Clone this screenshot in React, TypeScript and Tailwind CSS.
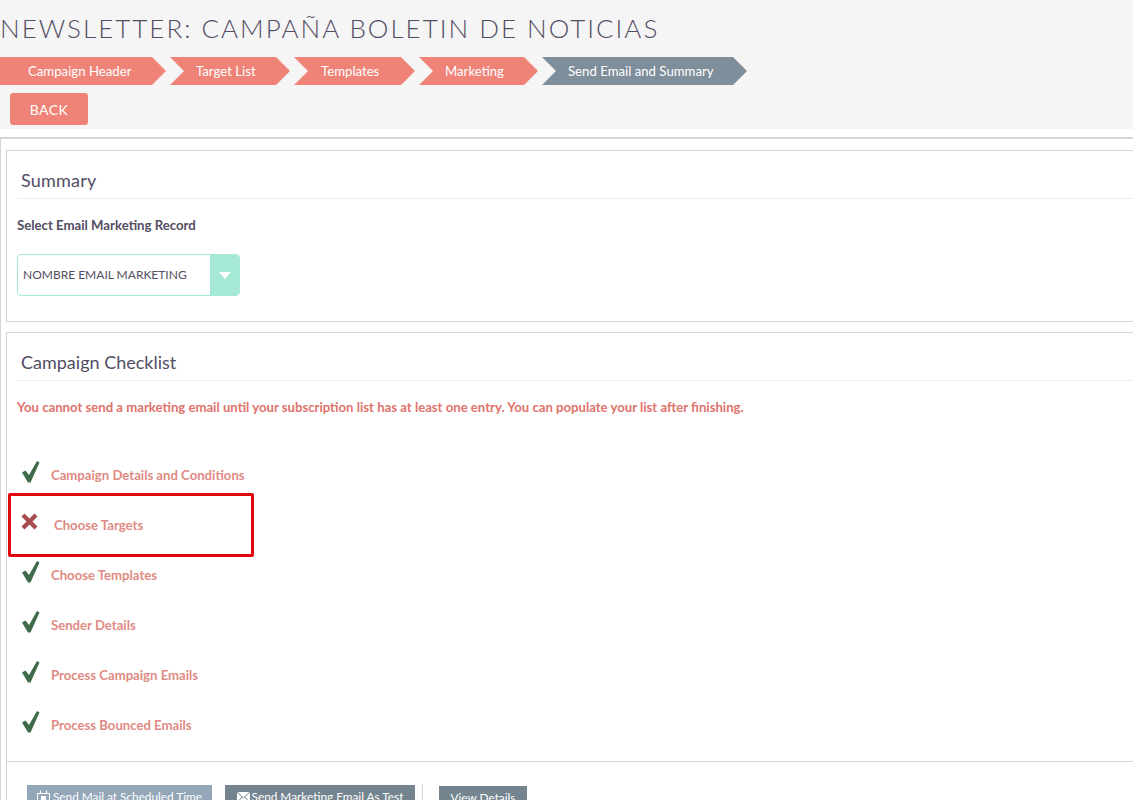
const steps = [
  { label: 'Campaign Header', width: 'w-[166px]', pad: 'pl-[28px]', first: true },
  { label: 'Target List', width: 'w-[120px]', pad: 'pl-[26px]' },
  { label: 'Templates', width: 'w-[121px]', pad: 'pl-[27px]' },
  { label: 'Marketing', width: 'w-[119px]', pad: 'pl-[26px]' },
  { label: 'Send Email and Summary', width: 'w-[205px]', pad: 'pl-[26px]', active: true },
]

const checklist = [
  { label: 'Campaign Details and Conditions', ok: true },
  { label: 'Choose Targets', ok: false },
  { label: 'Choose Templates', ok: true },
  { label: 'Sender Details', ok: true },
  { label: 'Process Campaign Emails', ok: true },
  { label: 'Process Bounced Emails', ok: true },
]

function Check() {
  return (
    <svg width="18" height="22" viewBox="0 0 18 22" className="mb-[7px] ml-[1px] shrink-0">
      <path d="M0 11.5 L3.5 9.5 L7 14 L15 0 L17.5 1.5 L8.5 21.5 L6 21.5 Z" fill="#3f6b4a" />
    </svg>
  )
}

function Cross() {
  return (
    <svg width="18" height="18" viewBox="0 0 18 18" className="mb-[6px] shrink-0">
      <path d="M0.5 3.5 L3.5 0.5 L8.5 5.5 L13.5 0.5 L16.5 3.5 L11.5 8.5 L16.5 13.5 L13.5 16.5 L8.5 11.5 L3.5 16.5 L0.5 13.5 L5.5 8.5 Z" fill="#a64b4f" />
    </svg>
  )
}

function ClockIcon() {
  return (
    <svg width="13" height="14" viewBox="0 0 13 14" className="mt-[2px] shrink-0" fill="none" stroke="white">
      <path d="M0.5 3.5 H12.5 V13.5 H0.5 Z M3.5 0.5 V3 M9.5 0.5 V3" />
      <rect x="4" y="6" width="5" height="7" fill="white" stroke="none" />
    </svg>
  )
}

function EnvelopeIcon() {
  return (
    <svg width="13" height="11" viewBox="0 0 13 11" className="mt-[4px] shrink-0">
      <rect width="13" height="11" fill="white" />
      <path d="M0 0 L6.5 6 L13 0 M0 11 L5 5 M13 11 L8 5" fill="none" stroke="#75858f" />
    </svg>
  )
}

export default function App() {
  return (
    <div className="h-[800px] w-[1133px] overflow-hidden bg-white font-['Lato','Liberation_Sans',sans-serif] text-[#534d64]">
      <div className="h-[129px] bg-[#f5f5f5]">
        <h1 className="pt-[12px] text-[26px] leading-[32px] font-light tracking-[2px] text-[#534d64]">
          NEWSLETTER: CAMPAÑA BOLETIN DE NOTICIAS
        </h1>
        <div className="mt-[13px] flex gap-[4px]">
          {steps.map((step) => (
            <div
              key={step.label}
              className={`flex h-[28px] items-center pt-[1px] text-[13.2px] text-white ${step.width} ${step.pad} ${step.active ? 'bg-[#7f8e9b]' : 'bg-[#f08377]'} ${
                step.first
                  ? '[clip-path:polygon(0_0,calc(100%-14px)_0,100%_50%,calc(100%-14px)_100%,0_100%)]'
                  : '[clip-path:polygon(0_0,calc(100%-14px)_0,100%_50%,calc(100%-14px)_100%,0_100%,14px_50%)]'
              }`}
            >
              {step.label}
            </div>
          ))}
        </div>
        <button className="ml-[10px] mt-[8px] h-[32px] w-[78px] rounded-[3px] bg-[#f08377] text-[14px] tracking-[0.4px] text-white">
          BACK
        </button>
      </div>

      <div className="mt-[8px] border-l border-t-2 border-[#d5d5d5] pl-[5px] pt-[11px]">
        <section className="h-[172px] border border-r-0 border-[#d5d5d5] pl-[10px]">
          <h2 className="border-b border-[#eeeeee] pl-[4px] pt-[18px] pb-[6px] text-[18px] leading-[23px] tracking-[0.2px] text-[#534d64]">
            Summary
          </h2>
          <p className="mt-[17px] text-[13.2px] leading-[18px] font-bold text-[#534d64]">Select Email Marketing Record</p>
          <div className="mt-[20px] flex h-[42px] w-[223px] overflow-hidden rounded-[4px] border border-[#a5e8d5]">
            <div className="flex flex-1 items-center pl-[5px] text-[12px] text-[#534d64]">NOMBRE EMAIL MARKETING</div>
            <div className="flex w-[29px] items-center justify-center bg-[#a5e8d5]">
              <div className="h-0 w-0 border-x-[6px] border-t-[7px] border-x-transparent border-t-white" />
            </div>
          </div>
        </section>

        <section className="mt-[10px] border border-r-0 border-[#d5d5d5]">
          <div className="pl-[10px]">
            <h2 className="border-b border-[#eeeeee] pl-[4px] pt-[18px] pb-[6px] text-[18px] leading-[23px] text-[#534d64]">
              Campaign Checklist
            </h2>
            <p className="mt-[17px] text-[13.15px] leading-[18px] font-bold text-[#e0736c]">
              You cannot send a marketing email until your subscription list has at least one entry. You can populate your list after finishing.
            </p>
          </div>
          <ul className="mt-[34px] pb-[11px]">
            {checklist.map((item) => (
              <li key={item.label} className="relative flex h-[50px] items-center pl-[14px]">
                {item.ok ? <Check /> : <Cross />}
                <span className={`pt-[2px] text-[13.15px] font-bold text-[#e08a83] ${item.ok ? 'pl-[11px]' : 'pl-[15px]'}`}>{item.label}</span>
                {!item.ok && (
                  <div className="absolute left-[1px] top-[-7px] h-[64px] w-[246px] rounded-[2px] border-[3px] border-[#e2060f]" />
                )}
              </li>
            ))}
          </ul>
          <div className="flex items-start border-t border-[#d5d5d5] pl-[20px] pt-[23px]">
            <button className="flex h-[30px] w-[185px] items-start justify-center gap-[3px] bg-[#93a7b8] pt-[3px] text-[11.8px] text-white">
              <ClockIcon />
              Send Mail at Scheduled Time
            </button>
            <button className="ml-[13px] flex h-[30px] w-[190px] items-start justify-center gap-[2px] bg-[#75858f] pt-[3px] text-[11.8px] text-white">
              <EnvelopeIcon />
              Send Marketing Email As Test
            </button>
            <div className="ml-[7px] -mt-[1px] h-[30px] w-px bg-[#d5d5d5]" />
            <button className="ml-[16px] mt-[1px] flex h-[30px] w-[88px] items-start justify-center bg-[#75858f] pt-[3px] text-[11.8px] text-white">View Details</button>
          </div>
        </section>
      </div>
    </div>
  )
}
